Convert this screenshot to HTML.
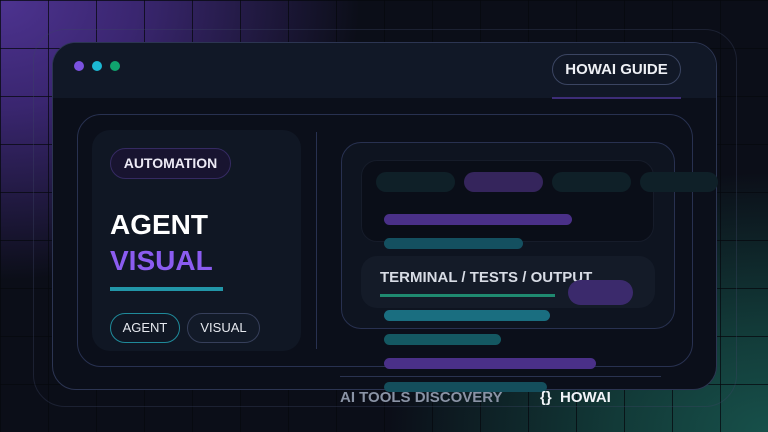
<!DOCTYPE html>
<html><head><style>
*{margin:0;padding:0;box-sizing:border-box}
body{width:768px;height:432px;overflow:hidden;position:relative;font-family:"Liberation Sans",sans-serif;font-weight:bold;
background:radial-gradient(ellipse 360px 280px at 0 0,#4d3390 0%,#3a2670 38%,rgba(20,16,40,0) 100%),radial-gradient(ellipse 380px 260px at 768px 432px,#17504a 0%,#123a38 40%,rgba(10,20,28,0) 100%),#0b0e18;}
.grid{position:absolute;inset:0;background-image:linear-gradient(to right,rgba(5,8,14,.75) 1px,transparent 1px),linear-gradient(to bottom,rgba(5,8,14,.75) 1px,transparent 1px);background-size:48px 48px;background-position:0 0}
.a{position:absolute}
.r{border-radius:999px}
</style></head><body>
<div class="grid"></div>
<div class="a" style="left:33px;top:29px;width:704px;height:378px;border:1px solid rgba(60,70,100,.35);border-radius:32px"></div>
<div class="a" style="left:52px;top:42px;width:665px;height:348px;background:#0b0f1a;border-radius:24px;border:1px solid #2c3552;overflow:hidden">
  <div class="a" style="left:0;top:0;right:0;height:55px;background:#111827"></div>
</div>
<div class="a r" style="left:74px;top:61px;width:10px;height:10px;background:#7b52e0"></div>
<div class="a r" style="left:92px;top:61px;width:10px;height:10px;background:#1cb8d4"></div>
<div class="a r" style="left:110px;top:61px;width:10px;height:10px;background:#10a36e"></div>
<div class="a r" style="left:552px;top:54px;width:129px;height:31px;border:1px solid #3b4562;color:#eef0f5;font-size:15px;line-height:29px;text-align:center">HOWAI GUIDE</div>
<div class="a" style="left:552px;top:97px;width:129px;height:2px;background:#3d2d78"></div>
<div class="a" style="left:77px;top:114px;width:616px;height:253px;border:1px solid #283150;border-radius:24px"></div>
<div class="a" style="left:92px;top:130px;width:209px;height:221px;background:#101724;border-radius:18px"></div>
<div class="a r" style="left:110px;top:148px;width:121px;height:31px;background:#181430;border:1px solid #352a62;color:#eceaf5;font-size:14px;line-height:29px;text-align:center">AUTOMATION</div>
<div class="a" style="left:110px;top:208px;color:#fff;font-size:28px;line-height:34px">AGENT</div>
<div class="a" style="left:110px;top:244px;color:#8b5cf0;font-size:28px;line-height:34px">VISUAL</div>
<div class="a" style="left:110px;top:287px;width:113px;height:4px;background:#2296a8"></div>
<div class="a r" style="left:110px;top:313px;width:70px;height:30px;border:1px solid #1f8a9a;color:#e6e9ef;font-size:13px;font-weight:normal;line-height:28px;text-align:center">AGENT</div>
<div class="a r" style="left:187px;top:313px;width:73px;height:30px;border:1px solid #363f5a;background:#121a28;color:#e6e9ef;font-size:13px;font-weight:normal;line-height:28px;text-align:center">VISUAL</div>
<div class="a" style="left:316px;top:132px;width:1px;height:217px;background:#283150"></div>
<div class="a" style="left:341px;top:142px;width:334px;height:187px;border:1px solid #283150;border-radius:20px;background:#0e1420"></div>
<div class="a" style="left:361px;top:160px;width:293px;height:82px;background:#0a0e18;border:1px solid #161c2a;border-radius:16px"></div>
<div class="a r" style="left:376px;top:172px;width:79px;height:20px;background:#0f2028"></div>
<div class="a r" style="left:464px;top:172px;width:79px;height:20px;background:#35255c"></div>
<div class="a r" style="left:552px;top:172px;width:79px;height:20px;background:#0f2028"></div>
<div class="a r" style="left:640px;top:172px;width:78px;height:20px;background:#0f2028"></div>
<div class="a r" style="left:384px;top:214px;width:188px;height:11px;background:#4a3088"></div>
<div class="a r" style="left:384px;top:238px;width:139px;height:11px;background:#145060"></div>
<div class="a" style="left:361px;top:256px;width:294px;height:52px;background:#141b28;border-radius:16px"></div>
<div class="a" style="left:380px;top:269px;color:#d8dce5;font-size:15px;line-height:18px">TERMINAL / TESTS / OUTPUT</div>
<div class="a" style="left:380px;top:294px;width:175px;height:3px;background:#1f8a70"></div>
<div class="a r" style="left:568px;top:280px;width:65px;height:25px;background:#3b2a6c"></div>
<div class="a r" style="left:384px;top:310px;width:166px;height:11px;background:#1a6e80"></div>
<div class="a r" style="left:384px;top:334px;width:117px;height:11px;background:#145862"></div>
<div class="a" style="left:340px;top:376px;width:321px;height:1px;background:#2a3350"></div>
<div class="a r" style="left:384px;top:358px;width:212px;height:11px;background:#4a3088"></div>
<div class="a r" style="left:384px;top:382px;width:163px;height:10px;background:#144e5c"></div>
<div class="a" style="left:340px;top:389px;color:#8a93a5;font-size:15px;line-height:18px">AI TOOLS DISCOVERY</div>
<div class="a" style="left:540px;top:389px;color:#f2f4f8;font-size:15px;line-height:18px">{}&nbsp; HOWAI</div>
</body></html>
